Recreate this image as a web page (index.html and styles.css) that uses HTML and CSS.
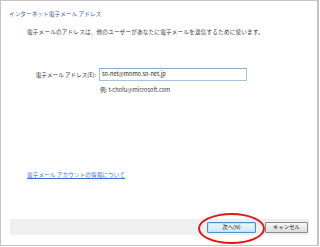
FILE: index.html
```html
<!DOCTYPE html>
<html lang="ja">
<head>
<meta charset="utf-8">
<link rel="stylesheet" href="styles.css">
</head>
<body>
<div class="frame">
  <div class="title">インターネット電子メール アドレス</div>
  <div class="intro">電子メールのアドレスは、他のユーザーがあなたに電子メールを送信するために使います。</div>
  <div class="row">
    <label class="label">電子メール アドレス(E):</label>
    <div class="input">so-net@momo.so-net.jp</div>
  </div>
  <div class="example">例: t-chofu@microsoft.com</div>
  <a class="link" href="#">電子メール アカウントの情報について</a>
  <div class="footer">
    <div class="btn btn-default">次へ(N)</div>
    <div class="btn">キャンセル</div>
  </div>
  <div class="circle"></div>
</div>
</body>
</html>
```
FILE: styles.css
```css
html, body {
  margin: 0;
  padding: 0;
  background: #ffffff;
}
body {
  font-family: "Noto Sans CJK JP", "Noto Sans", sans-serif;
  font-size: 5.6px;
  color: #3a3a3a;
}
.frame {
  position: relative;
  box-sizing: border-box;
  width: 319px;
  height: 246px;
  border: 1px solid #c4c4c4;
  border-right-width: 2px;
  padding-top: 9px;
  display: flex;
  flex-direction: column;
}
.title {
  height: 8px;
  line-height: 8px;
  margin-left: 8px;
  color: #3a5db0;
  font-size: 5.7px;
}
.intro {
  height: 8px;
  line-height: 8px;
  margin-top: 10px;
  margin-left: 26px;
  letter-spacing: 0.2px;
}
.row {
  display: flex;
  align-items: center;
  margin-top: 32px;
  height: 13px;
}
.label {
  width: 95px;
  text-align: right;
  margin-right: 3px;
}
.input {
  box-sizing: border-box;
  width: 148px;
  height: 13px;
  line-height: 11px;
  border: 1px solid #a9c2dc;
  border-top-color: #8fa8c4;
  padding-left: 2px;
  color: #222;
}
.example {
  height: 8px;
  line-height: 8px;
  margin-top: 5px;
  margin-left: 99px;
}
.link {
  align-self: flex-start;
  height: 8px;
  line-height: 8px;
  margin-top: 77px;
  margin-left: 26px;
  color: #3b73c8;
  text-decoration: underline;
  letter-spacing: 0.1px;
}
.footer {
  margin: 40px 8px 0 9px;
  height: 16px;
  background: #efefef;
  display: flex;
  align-items: center;
  justify-content: flex-end;
  gap: 9px;
  padding-right: 1px;
}
.btn {
  box-sizing: border-box;
  width: 43px;
  height: 11px;
  line-height: 9px;
  text-align: center;
  border: 1px solid #8a8a8a;
  border-radius: 1px;
  background: linear-gradient(#f6f6f6, #dedede);
  font-size: 5.4px;
  color: #222;
}
.btn-default {
  width: 49px;
  border-color: #4f8fc8;
  background: linear-gradient(#eaf6fd, #d0e8f7);
  box-shadow: inset 0 0 0 1px #bfe3f8;
}
.circle {
  position: absolute;
  left: 197px;
  top: 212px;
  width: 63px;
  height: 27px;
  border: 2px solid #e3161b;
  border-radius: 50%;
}
```
